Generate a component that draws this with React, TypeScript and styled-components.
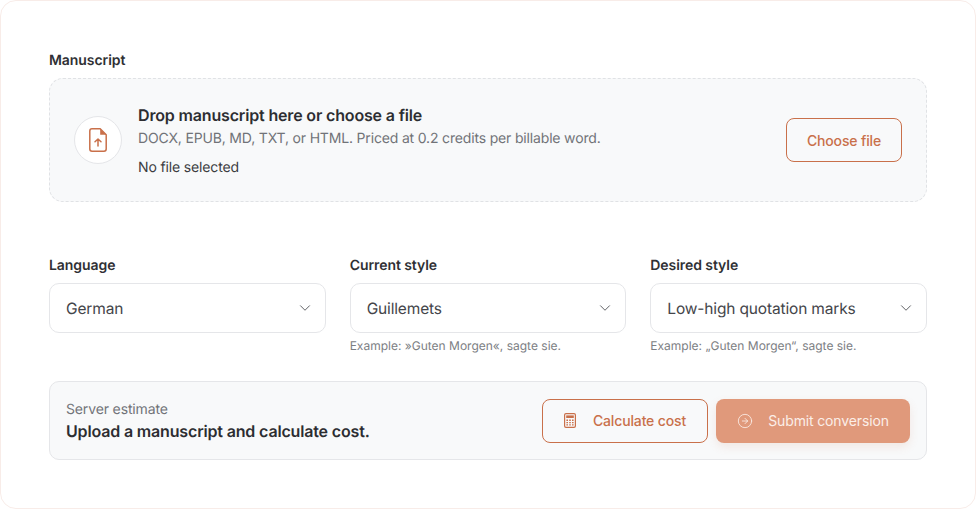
import React from "react";
import styled, { createGlobalStyle } from "styled-components";
import { ChevronDown, CircleArrowRight } from "lucide-react";

const GlobalStyle = createGlobalStyle`
  html, body {
    margin: 0;
    padding: 0;
    background: #fff;
  }
  * {
    box-sizing: border-box;
  }
`;

const FileIcon = (): JSX.Element => (
  <svg width="18" height="24" viewBox="0 0 18 24" fill="none" stroke="currentColor" strokeWidth="1.5">
    <path d="M3 .8h8.2L17.2 6.8V21a2.2 2.2 0 0 1-2.2 2.2H3A2.2 2.2 0 0 1 .8 21V3A2.2 2.2 0 0 1 3 .8Z" strokeLinejoin="round" />
    <path d="M11.2 1v5.8h6L11.2 1Z" fill="currentColor" stroke="none" />
    <path d="M9 18v-7M6 13.8 9 11l3 2.8" strokeLinecap="round" strokeLinejoin="round" />
  </svg>
);

const CalculatorIcon = (): JSX.Element => (
  <svg width="12" height="15" viewBox="0 0 12 15" fill="none">
    <rect x=".6" y=".6" width="10.8" height="13.8" rx="1.4" stroke="currentColor" strokeWidth="1.2" />
    <rect x="2.2" y="2.4" width="7.6" height="2.6" fill="currentColor" />
    <path
      d="M2.4 6.6h1.6v1.3H2.4zM5.2 6.6h1.6v1.3H5.2zM8 6.6h1.6v1.3H8zM2.4 9h1.6v1.3H2.4zM5.2 9h1.6v1.3H5.2zM8 9h1.6v1.3H8zM2.4 11.3h1.6v1.3H2.4zM5.2 11.3h1.6v1.3H5.2zM8 11.3h1.6v1.3H8z"
      fill="currentColor"
    />
  </svg>
);

const App: React.FC = (): JSX.Element => {
  return (
    <>
      <GlobalStyle />
      <Card>
        <Label>Manuscript</Label>
        <DropZone>
          <IconCircle>
            <FileIcon />
          </IconCircle>
          <DropText>
            <DropTitle>Drop manuscript here or choose a file</DropTitle>
            <DropHint>DOCX, EPUB, MD, TXT, or HTML. Priced at 0.2 credits per billable word.</DropHint>
            <FileName>No file selected</FileName>
          </DropText>
          <ChooseButton>Choose file</ChooseButton>
        </DropZone>
        <Fields>
          <Field>
            <Label>Language</Label>
            <Select>
              German
              <ChevronDown size={18} strokeWidth={1.25} />
            </Select>
          </Field>
          <Field>
            <Label>Current style</Label>
            <Select>
              Guillemets
              <ChevronDown size={18} strokeWidth={1.25} />
            </Select>
            <Example>Example: »Guten Morgen«, sagte sie.</Example>
          </Field>
          <Field>
            <Label>Desired style</Label>
            <Select>
              Low-high quotation marks
              <ChevronDown size={18} strokeWidth={1.25} />
            </Select>
            <Example>Example: „Guten Morgen“, sagte sie.</Example>
          </Field>
        </Fields>
        <EstimateBar>
          <Estimate>
            <EstimateLabel>Server estimate</EstimateLabel>
            <EstimateValue>Upload a manuscript and calculate cost.</EstimateValue>
          </Estimate>
          <Actions>
            <CalculateButton>
              <CalculatorIcon />
              Calculate cost
            </CalculateButton>
            <SubmitButton>
              <CircleArrowRight size={16} strokeWidth={1.25} />
              Submit conversion
            </SubmitButton>
          </Actions>
        </EstimateBar>
      </Card>
    </>
  );
};

const Card = styled.div`
  width: 976px;
  height: 509px;
  padding: 51px 48px 0;
  background: #fff;
  border: 1px solid #f8ece8;
  border-radius: 16px;
  font-family: Inter, "Liberation Sans", sans-serif;
  text-rendering: geometricPrecision;
  color: #27272a;
`;

const Label = styled.div`
  font-size: 14px;
  font-weight: 600;
  line-height: 17px;
  letter-spacing: -0.005em;
  color: #2f3034;
`;

const DropZone = styled.div`
  display: flex;
  align-items: center;
  height: 124px;
  margin-top: 9px;
  padding: 0 24px;
  background: #f8f9fa;
  border: 1px dashed #e0e2e5;
  border-radius: 14px;
`;

const IconCircle = styled.div`
  display: flex;
  align-items: center;
  justify-content: center;
  flex: none;
  width: 48px;
  height: 48px;
  margin-right: 16px;
  background: #fff;
  border: 1px solid #e5e6e9;
  border-radius: 50%;
  color: #c9704a;
`;

const DropText = styled.div`
  flex: 1;
`;

const DropTitle = styled.div`
  font-size: 16px;
  font-weight: 600;
  line-height: 20px;
  letter-spacing: -0.01em;
  color: #2c2d31;
`;

const DropHint = styled.div`
  margin-top: 5px;
  font-size: 14px;
  line-height: 17px;
  letter-spacing: -0.012em;
  color: #717378;
`;

const FileName = styled.div`
  margin-top: 12px;
  font-size: 14px;
  line-height: 17px;
  letter-spacing: -0.01em;
  color: #3c3d41;
`;

const OutlineButton = styled.button`
  display: flex;
  align-items: center;
  justify-content: center;
  background: transparent;
  border: 1px solid #c9704a;
  border-radius: 8px;
  color: #c9704a;
  font-family: inherit;
  font-size: 14px;
  font-weight: 450;
  letter-spacing: -0.01em;
`;

const ChooseButton = styled(OutlineButton)`
  width: 116px;
  height: 44px;
`;

const Fields = styled.div`
  display: grid;
  grid-template-columns: repeat(3, 1fr);
  gap: 24px;
  margin-top: 55px;
`;

const Field = styled.div`
  min-height: 70px;
`;

const Select = styled.div`
  display: flex;
  align-items: center;
  justify-content: space-between;
  height: 50px;
  margin-top: 9px;
  padding: 0 11px 0 16px;
  background: #fff;
  border: 1px solid #e5e6e9;
  border-radius: 10px;
  font-size: 15.5px;
  letter-spacing: -0.01em;
  color: #44454a;

  svg {
    color: #55575c;
  }
`;

const Example = styled.div`
  margin-top: 6px;
  font-size: 12px;
  line-height: 14px;
  color: #7c7e83;
`;

const EstimateBar = styled.div`
  display: flex;
  align-items: center;
  justify-content: space-between;
  height: 79px;
  margin-top: 28px;
  padding: 0 16px;
  background: #f8f9fa;
  border: 1px solid #e5e6e9;
  border-radius: 10px;
`;

const Estimate = styled.div`
  padding-top: 1px;
`;

const EstimateLabel = styled.div`
  font-size: 14px;
  line-height: 17px;
  letter-spacing: -0.01em;
  color: #717378;
`;

const EstimateValue = styled.div`
  margin-top: 3px;
  font-size: 16px;
  font-weight: 600;
  line-height: 20px;
  letter-spacing: -0.01em;
  color: #2c2d31;
`;

const Actions = styled.div`
  display: flex;
  gap: 8px;
`;

const CalculateButton = styled(OutlineButton)`
  gap: 17px;
  width: 166px;
  height: 44px;
`;

const SubmitButton = styled.button`
  display: flex;
  align-items: center;
  justify-content: center;
  gap: 15px;
  width: 194px;
  height: 44px;
  background: #e0997b;
  border: 0;
  border-radius: 8px;
  box-shadow: 0 4px 10px rgba(201, 104, 63, 0.12);
  color: #fbeee8;
  font-family: inherit;
  font-size: 14px;
  font-weight: 400;
  letter-spacing: -0.01em;
`;

export default App;
